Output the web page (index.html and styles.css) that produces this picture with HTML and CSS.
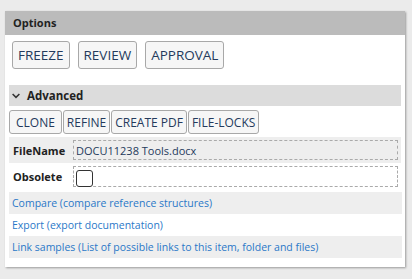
FILE: index.html
```
<!DOCTYPE html>
<html>
<head>
<meta charset="utf-8">
<link rel="stylesheet" href="styles.css">
</head>
<body>
<div class="panel">
  <div class="panel-head">Options</div>
  <div class="panel-body">
    <div class="main-actions">
      <button class="btn">FREEZE</button>
      <button class="btn">REVIEW</button>
      <button class="btn">APPROVAL</button>
    </div>
    <div class="section-head">
      <svg class="chev" width="8" height="6" viewBox="0 0 8 6"><path d="M0.6 1 L4 4.4 L7.4 1" fill="none" stroke="#333" stroke-width="1.5"/></svg>
      <span>Advanced</span>
    </div>
    <div class="small-actions">
      <button class="sbtn">CLONE</button>
      <button class="sbtn">REFINE</button>
      <button class="sbtn">CREATE PDF</button>
      <button class="sbtn">FILE-LOCKS</button>
    </div>
    <div class="field alt">
      <div class="label">FileName</div>
      <div class="value">DOCU11238 Tools.docx</div>
    </div>
    <div class="field">
      <div class="label">Obsolete</div>
      <div class="value"><span class="check"></span></div>
    </div>
    <div class="links">
      <a class="link alt">Compare (compare reference structures)</a>
      <a class="link">Export (export documentation)</a>
      <a class="link alt">Link samples (List of possible links to this item, folder and files)</a>
    </div>
  </div>
</div>
</body>
</html>
```
FILE: styles.css
```
html, body { margin: 0; padding: 0; }
body {
  background: #ebebeb;
  font-family: "Open Sans", "Noto Sans", sans-serif;
  padding: 11px 0 0 5px;
  height: 279px;
  box-sizing: border-box;
}
.panel {
  width: 400px;
  background: #fff;
  box-shadow: 1px 1px 2px rgba(0,0,0,0.35);
}
.panel-head {
  height: 24px;
  line-height: 24px;
  background: #bbbbbb;
  padding-left: 8px;
  font-weight: bold;
  font-size: 11px;
  color: #222;
}
.panel-body { padding: 6px 4px 9px 4px; }
.main-actions { display: flex; gap: 8px; padding-left: 3px; }
.btn {
  height: 28px;
  padding: 0 5px;
  background: #f6f6f6;
  border: 1px solid #a8a8a8;
  border-radius: 3px;
  font-family: inherit;
  font-size: 13.5px;
  color: #243a5c;
}
.section-head {
  margin-top: 16px;
  height: 21px;
  background: #dcdcdc;
  display: flex;
  align-items: center;
  padding-left: 3px;
  font-weight: bold;
  font-size: 11.5px;
  color: #222;
}
.chev { margin-right: 7px; }
.small-actions { display: flex; gap: 1px; margin-top: 4px; }
.sbtn {
  height: 24px;
  padding: 0 3px;
  background: #f6f6f6;
  border: 1px solid #a8a8a8;
  border-radius: 3px;
  font-family: inherit;
  font-size: 12px;
  color: #243a5c;
}
.sbtn:first-child { padding: 0 6px; }
.field {
  display: flex;
  align-items: center;
  height: 26px;
  margin-top: 3px;
}
.field + .field { margin-top: 0; height: 27px; }
.field.alt { background: #eeeeee; }
.label {
  width: 64px;
  box-sizing: border-box;
  padding-left: 4px;
  font-weight: bold;
  font-size: 11px;
  color: #222;
}
.value {
  flex: 1;
  margin-right: 3px;
  height: 20px;
  border: 1px dashed #aaa;
  box-sizing: border-box;
  display: flex;
  align-items: center;
  padding-left: 2px;
  font-size: 11px;
  color: #1f3a5c;
}
.field + .field .value { height: 21px; align-items: flex-end; }
.check {
  width: 17px;
  height: 17px;
  box-sizing: border-box;
  border: 1px solid #333;
  border-radius: 3px;
  background: #fff;
  margin-bottom: -1px;
}
.links { margin-top: 2px; }
.link {
  display: block;
  height: 22px;
  line-height: 22px;
  padding-left: 3px;
  font-size: 10.5px;
  color: #2a78c8;
  margin-right: -1px;
}
.link.alt { background: #eeeeee; }
```
